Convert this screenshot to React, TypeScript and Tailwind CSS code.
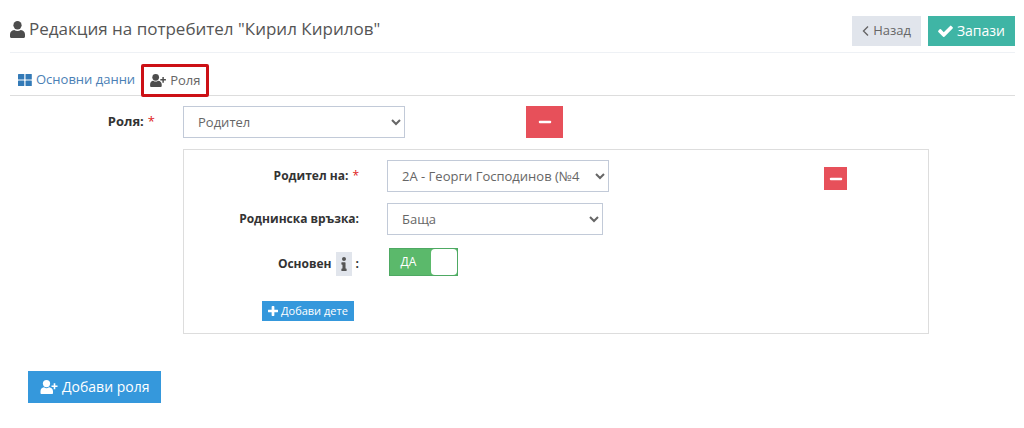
import React, { useState } from 'react';
import { FaInfo, FaMinus } from 'react-icons/fa';

interface IconProps {
  className?: string;
}

const UserIcon: React.FC<IconProps> = ({ className }) => (
  <svg viewBox="0 0 15 17" fill="currentColor" aria-hidden="true" className={className}>
    <ellipse cx="7.5" cy="4.2" rx="4.1" ry="4.2" />
    <path d="M4.2 9c2 1.2 4.600 1.200 6.600 0C13.400 9.300 15 11 15 13.600v1.900c0 .9-.6 1.500-1.500 1.500h-12C.6 17 0 16.400 0 15.500V13.600C0 11 1.600 9.300 4.200 9z" />
  </svg>
);

const UserPlusIcon: React.FC<IconProps> = ({ className }) => (
  <svg viewBox="0 0 17 14" fill="currentColor" aria-hidden="true" className={className}>
    <ellipse cx="6" cy="3.6" rx="3.6" ry="3.6" />
    <path d="M3.5 7.3c1.500 1.200 3.500 1.200 5 0 2.500.2 4 1.700 4 4V13c0 .6-.4 1-1 1H1c-.6 0-1-.4-1-1v-1.700c0-2.300 1.300-3.800 3.500-4z" />
    <path d="M13.200 3.200h1.600v2.200H17v1.700h-2.200v2.200h-1.600V7.100H11V5.400h2.200z" />
  </svg>
);

const TilesIcon: React.FC<IconProps> = ({ className }) => (
  <svg viewBox="0 0 14 12" fill="currentColor" aria-hidden="true" className={className}>
    <rect width="6.3" height="5.4" rx="0.5" />
    <rect x="7.5" width="6.3" height="5.4" rx="0.5" />
    <rect y="6.5" width="6.3" height="5.4" rx="0.5" />
    <rect x="7.5" y="6.5" width="6.3" height="5.4" rx="0.5" />
  </svg>
);

const AngleLeftIcon: React.FC<IconProps> = ({ className }) => (
  <svg viewBox="0 0 7 12" fill="none" stroke="currentColor" strokeWidth="1.4" aria-hidden="true" className={className}>
    <path d="M6 1.5L1.5 6L6 10.5" />
  </svg>
);

const CheckIcon: React.FC<IconProps> = ({ className }) => (
  <svg viewBox="121 270 1550 1252" fill="currentColor" aria-hidden="true" className={className}>
    <path d="M1671 566q0 40-28 68l-724 724-136 136q-28 28-68 28t-68-28l-136-136-362-362q-28-28-28-68t28-68l136-136q28-28 68-28t68 28l294 295 656-657q28-28 68-28t68 28l136 136q28 28 28 68z" />
  </svg>
);

const PlusIcon: React.FC<IconProps> = ({ className }) => (
  <svg viewBox="192 128 1408 1408" fill="currentColor" aria-hidden="true" className={className}>
    <path d="M1600 736v192q0 40-28 68t-68 28h-416v416q0 40-28 68t-68 28h-192q-40 0-68-28t-28-68v-416h-416q-40 0-68-28t-28-68v-192q0-40 28-68t68-28h416v-416q0-40 28-68t68-28h192q40 0 68 28t28 68v416h416q40 0 68 28t28 68z" />
  </svg>
);

interface RemoveButtonProps {
  label: string;
  className: string;
}

const RemoveButton: React.FC<RemoveButtonProps> = ({ label, className }) => (
  <button
    type="button"
    aria-label={label}
    className={`flex items-center justify-center bg-[#e7505a] text-white hover:bg-[#e12330] ${className}`}
  >
    <FaMinus />
  </button>
);

const Required = () => <span className="ml-1 font-normal text-[#e02222]">*</span>;

const selectClass = 'h-8 border border-[#c2cad8] bg-white pr-3 pl-[10px] text-[13px] text-[#666]';

const App: React.FC = () => {
  const [role, setRole] = useState('parent');
  const [child, setChild] = useState('4');
  const [relation, setRelation] = useState('father');
  const [isPrimary, setIsPrimary] = useState(true);

  return (
    <div className="pt-4 pr-[9px] pb-6 pl-[10px] font-['Open_Sans',sans-serif] text-[13px] text-[#333]">
      {/* Page title */}
      <header className="flex h-[37px] items-start justify-between border-b border-[#eef1f5]">
        <h1 className="flex items-center gap-1 pt-px text-[17px] leading-6 text-[#555]">
          <UserIcon className="h-[17px] w-[15px] text-[#4d4d4d]" />
          Редакция на потребител "Кирил Кирилов"
        </h1>
        <div className="flex gap-[7px]">
          <button type="button" className="flex h-[30px] items-center gap-1 bg-[#e1e5ec] px-[10px] text-[13px] text-[#666]">
            <AngleLeftIcon className="h-3 w-[7px]" />
            Назад
          </button>
          <button type="button" className="flex h-[30px] items-center gap-1 bg-[#3fb5a5] px-[10px] text-sm text-white">
            <CheckIcon className="h-3 w-[15px]" />
            Запази
          </button>
        </div>
      </header>

      {/* Tabs */}
      <nav className="mt-[11px] flex h-8 items-stretch border-b border-[#ddd] pl-2">
        <a href="#main" className="flex items-center gap-1 text-[13px] text-[#4a80b5]">
          <TilesIcon className="h-3 w-[14px] text-[#337ab7]" />
          Основни данни
        </a>
        <a
          href="#role"
          aria-current="page"
          className="-mb-[2px] ml-[6px] flex items-center gap-1 rounded-xs border-3 border-[#cc1015] px-[6px] text-[13px] text-[#666]"
        >
          <UserPlusIcon className="h-[13px] w-4 text-[#4d4d4d]" />
          Роля
        </a>
      </nav>

      <form>
        {/* Role */}
        <div className="mt-[10px] flex">
          <label htmlFor="role" className="w-[145px] shrink-0 pt-[6px] text-right font-bold">
            Роля:
            <Required />
          </label>
          <select
            id="role"
            value={role}
            onChange={(e) => setRole(e.target.value)}
            className={`${selectClass} ml-7 w-[222px]`}
          >
            <option value="parent">Родител</option>
            <option value="teacher">Учител</option>
          </select>
          <RemoveButton label="Премахни роля" className="ml-[121px] h-8 w-[37px] text-sm" />
        </div>

        {/* Children of the parent */}
        <div className="mt-[11px] mr-[86px] ml-[173px] border border-[#ddd] pt-[10px] pb-3 text-xs">
          <div className="flex">
            <label htmlFor="child" className="w-[175px] shrink-0 pt-2 text-right font-bold">
              Родител на:
              <Required />
            </label>
            <select
              id="child"
              value={child}
              onChange={(e) => setChild(e.target.value)}
              className={`${selectClass} ml-7 w-[222px]`}
            >
              <option value="4">2А - Георги Господинов (№4)</option>
            </select>
            <RemoveButton label="Премахни дете" className="mt-[7px] mr-[81px] ml-auto size-[23px] text-sm" />
          </div>

          <div className="mt-[11px] flex">
            <label htmlFor="relation" className="w-[175px] shrink-0 pt-2 text-right font-bold">
              Роднинска връзка:
            </label>
            <select
              id="relation"
              value={relation}
              onChange={(e) => setRelation(e.target.value)}
              className={`${selectClass} ml-7 w-[216px]`}
            >
              <option value="father">Баща</option>
              <option value="mother">Майка</option>
            </select>
          </div>

          <div className="mt-[13px] flex">
            <label htmlFor="primary" className="flex w-[175px] shrink-0 items-center justify-end gap-1 pt-1 font-bold">
              Основен
              <span className="flex h-6 w-4 items-center justify-center bg-[#e1e5ec] text-[#555]">
                <FaInfo className="h-[14px] w-2" />
              </span>
              :
            </label>
            <label className="ml-[30px] flex h-7 w-[69px] cursor-pointer border border-[#4ea963] bg-[#5bb96b]">
              <input
                id="primary"
                type="checkbox"
                checked={isPrimary}
                onChange={(e) => setIsPrimary(e.target.checked)}
                className="sr-only"
              />
              <span className="flex flex-1 items-center justify-center pr-1 text-xs text-white">
                {isPrimary ? 'ДА' : 'НЕ'}
              </span>
              <span className="w-[26px] rounded-sm bg-white" />
            </label>
          </div>

          <button
            type="button"
            className="mt-[25px] ml-[78px] flex h-5 items-center gap-[3px] bg-[#3598dc] px-[6px] text-[11px] text-white"
          >
            <PlusIcon className="size-[10px]" />
            Добави дете
          </button>
        </div>

        <button
          type="button"
          className="mt-[37px] ml-[18px] flex h-8 items-center gap-1 bg-[#3598dc] px-3 text-sm text-white"
        >
          <UserPlusIcon className="h-[14px] w-[18px]" />
          Добави роля
        </button>
      </form>
    </div>
  );
};

export default App;
